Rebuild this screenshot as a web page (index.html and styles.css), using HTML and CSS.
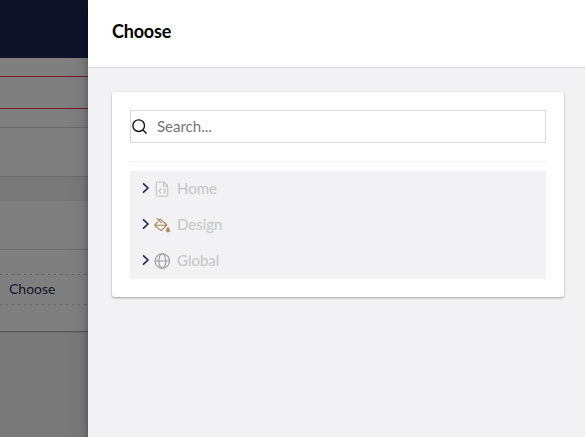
FILE: index.html
```html
<!DOCTYPE html>
<html lang="en">
<head>
<meta charset="utf-8">
<title>Choose</title>
<link rel="stylesheet" href="styles.css">
</head>
<body>
<main class="app">
  <section class="backdrop">
    <div class="topbar"></div>
    <div class="strip"></div>
    <div class="invalid"></div>
    <div class="gap"></div>
    <div class="panel"></div>
    <div class="spacer"></div>
    <div class="box">
      <div class="box-head"></div>
      <div class="box-body"><button class="choose">Choose</button></div>
    </div>
  </section>
  <aside class="drawer">
    <header class="drawer-head"><h1>Choose</h1></header>
    <div class="card">
      <label class="search">
        <svg width="18" height="18" viewBox="0 0 18 18"><circle cx="7.7" cy="7.7" r="5.8"/><path d="M12 12l3.500 3.500"/></svg>
        <input type="text" placeholder="Search...">
      </label>
      <hr>
      <ul class="tree">
        <li>
          <svg class="caret" viewBox="0 0 8 10"><path d="M1.6 .8L6 5 1.6 9.2"/></svg>
          <svg class="icon file" viewBox="0 0 16 16"><path d="M3.500 1h6.300l3.900 3.900v9.200a1.200 1.200 0 0 1-1.200 1.200h-9a1.200 1.200 0 0 1-1.200-1.200V2.200A1.200 1.200 0 0 1 3.500 1zM9.500 1.200v4h4M6.800 8l-2 2 2 2M9.500 8l2 2-2 2"/></svg>
          <span>Home</span>
        </li>
        <li>
          <svg class="caret" viewBox="0 0 8 10"><path d="M1.6 .8L6 5 1.6 9.2"/></svg>
          <svg class="icon paint" viewBox="0 0 16 16"><path d="M2.800 1.300l4.400 4.300M4.800 3.200l1.400-1.400L12.800 8 7.800 13.100a1 1 0 0 1-1.400 0L1 8.600a.7.7 0 0 1 0-1L3.800 4.800M1 8.200h11"/><path class="drop" d="M14 10.700c1 1.300 1.400 2 1.400 2.700a1.400 1.400 0 0 1-2.800 0c0-.7.400-1.400 1.400-2.700z"/></svg>
          <span>Design</span>
        </li>
        <li>
          <svg class="caret" viewBox="0 0 8 10"><path d="M1.6 .8L6 5 1.6 9.2"/></svg>
          <svg class="icon globe" viewBox="0 0 16 16"><circle cx="8.300" cy="8" r="7.200"/><ellipse cx="8.300" cy="8" rx="3.500" ry="7.200"/><path d="M1.200 8h14.200"/></svg>
          <span>Global</span>
        </li>
      </ul>
    </div>
  </aside>
</main>
</body>
</html>
```
FILE: styles.css
```css
* { box-sizing: border-box; }
body { margin: 0; font: 15px/24px Lato, sans-serif; }
.app { display: flex; width: 585px; height: 437px; overflow: hidden; background: #797979; }
.backdrop { flex: 0 0 88px; }
.topbar { height: 58px; background: #0e1327; }
.strip { height: 18px; background: #7f7f7f; }
.invalid { height: 33px; background: #7f7f7f; border: solid #7c1530; border-width: 1px 0; }
.gap { height: 18px; background: #7f7f7f; }
.panel { height: 50px; background: #7f7f7f; border: solid #6b6b6b; border-width: 1px 0; }
.spacer { height: 23px; }
.box { height: 131px; background: #7f7f7f; border-top: 1px solid #757575; box-shadow: 0 1px 1px #555; }
.box-head { height: 49px; border-bottom: 1px solid #6e6e6e; }
.box-body { padding-top: 24px; }
.choose { display: block; width: 88px; height: 31px; padding: 0 0 2px 9px; background: repeating-linear-gradient(90deg, #606060 0 2px, transparent 2px 6px) 0 0 / 100% 1px no-repeat, repeating-linear-gradient(90deg, #606060 0 2px, transparent 2px 6px) 0 100% / 100% 1px no-repeat; border: 0; color: #10152b; font: 14px/29px Lato, sans-serif; text-align: left; }
.drawer { flex: 1; background: #f2f2f4; box-shadow: 0 10px 20px rgba(0,0,0,.19), 0 6px 6px rgba(0,0,0,.23); }
.drawer-head { height: 68px; padding: 19px 24px; background: #fff; border-bottom: 1px solid #d8d7d9; }
h1 { margin: 0; font-size: 18px; line-height: 24px; font-weight: 700; letter-spacing: -.2px; color: #000; }
.card { width: 452px; height: 205px; margin: 24px 0 0 24px; padding: 18px; background: #fff; border-radius: 3px; box-shadow: 0 1px 3px rgba(0,0,0,.12), 0 1px 2px rgba(0,0,0,.24); }
.search { display: flex; align-items: center; height: 33px; border: 1px solid #d8d7d9; }
.search svg { fill: none; stroke: #111; stroke-width: 1.4; }
.search input { flex: 1; height: 31px; margin-left: 7px; padding: 0 1px 2px; border: 0; outline: 0; background: transparent; font: 15px Lato, sans-serif; }
.search input::placeholder { color: #757575; }
hr { height: 1px; margin: 18px 0 9px; border: 0; background: #f2f2f4; }
.tree { margin: 0; padding: 0; list-style: none; background: #f2f2f4; color: #c4c4c4; }
.tree li { display: flex; align-items: center; height: 36px; padding-left: 12px; }
.tree span { padding-bottom: 2px; }
.tree svg { fill: none; stroke-linecap: round; stroke-linejoin: round; }
.caret { width: 8px; height: 10px; margin: 0 4px 2px 0; stroke: #1b264f; stroke-width: 1.6; }
.icon { width: 16px; height: 16px; margin-right: 7px; stroke-width: 1.1; }
.file { stroke: #c4c4c4; }
.paint { stroke: #a78354; }
.drop { fill: #b89a72; }
.globe { stroke: #9c9c9c; }
```
